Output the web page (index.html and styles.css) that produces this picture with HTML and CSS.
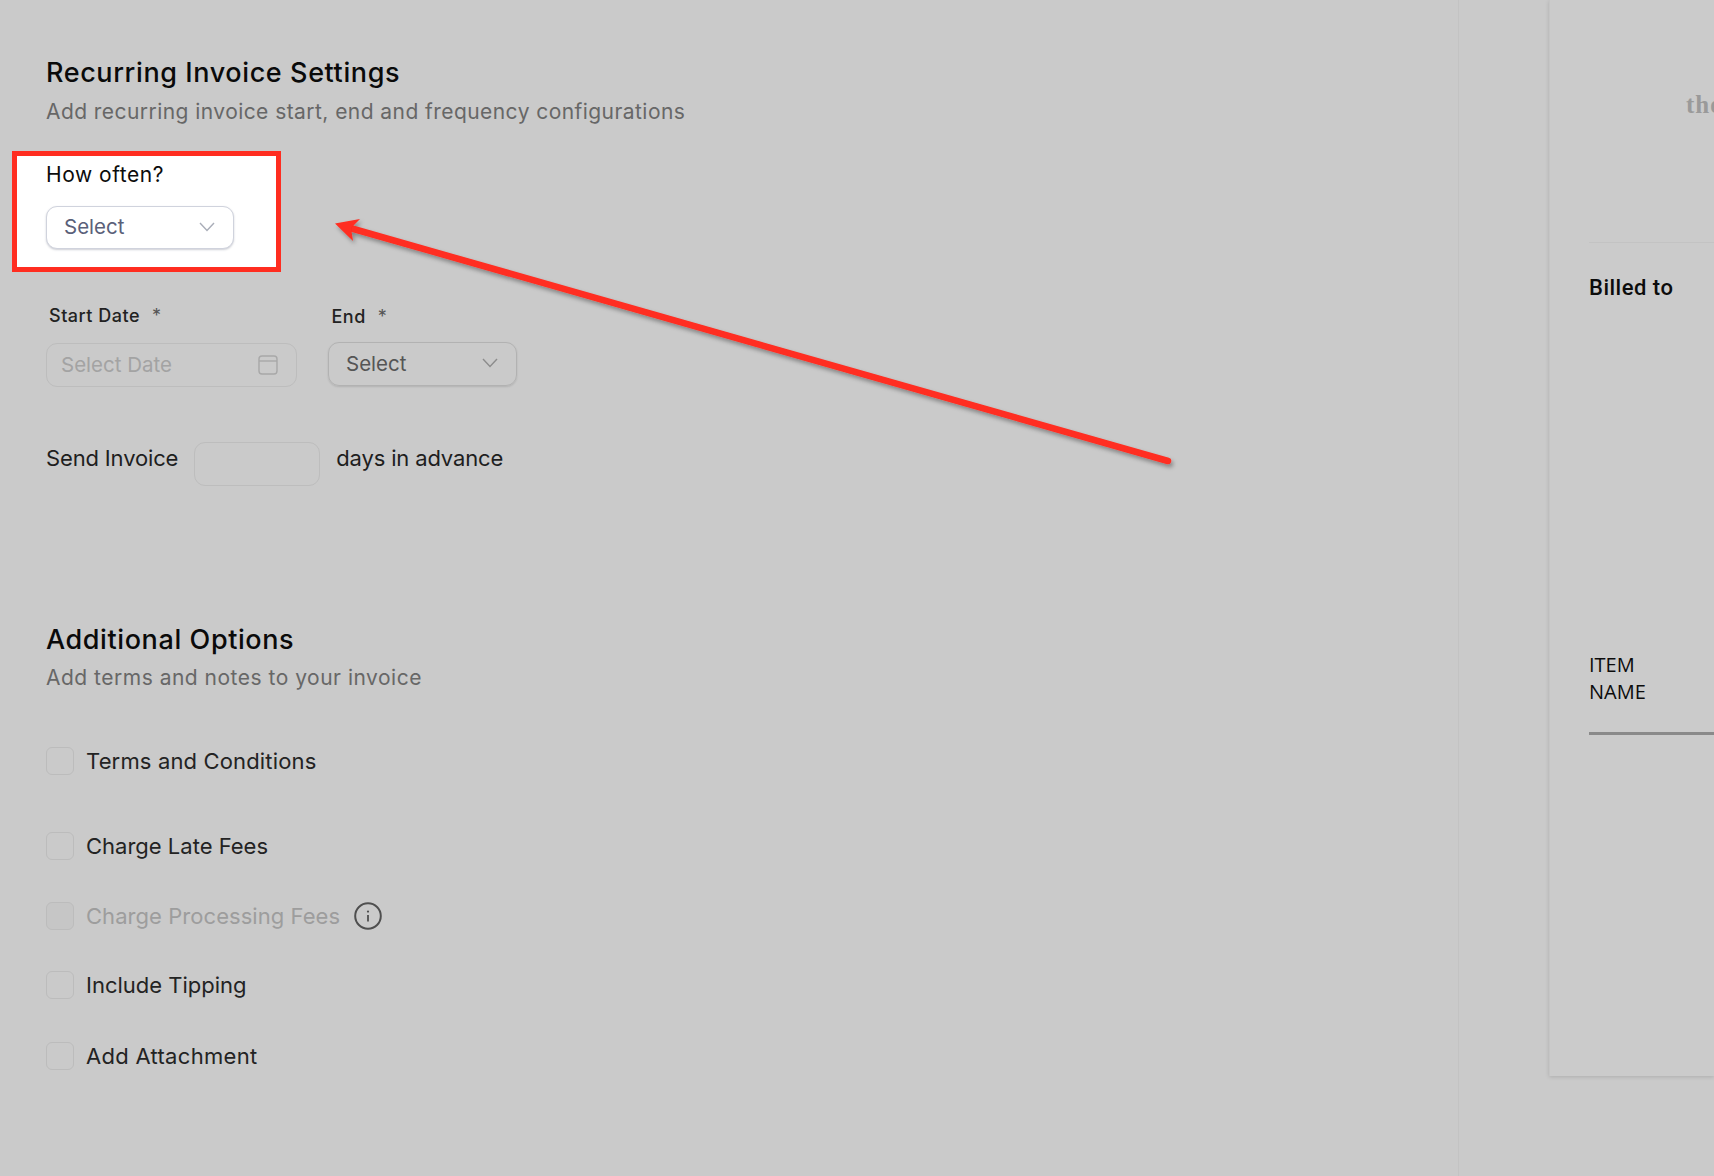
FILE: index.html
```html
<!DOCTYPE html>
<html lang="en">
<head>
<meta charset="utf-8">
<title>Recurring Invoice Settings</title>
<link rel="stylesheet" href="styles.css">
</head>
<body>
<div class="page">
  <main class="pane">
    <h2 class="title">Recurring Invoice Settings</h2>
    <p class="sub">Add recurring invoice start, end and frequency configurations</p>

    <section class="highlight">
      <div class="how">How often?</div>
      <div class="select select-lit">
        <span>Select</span>
        <svg class="chev" viewBox="0 0 16 10" width="16" height="10"><path d="M1 1l7 7.5L15 1" fill="none" stroke="#a9adb8" stroke-width="1.4"/></svg>
      </div>
    </section>

    <div class="dates">
      <div class="col-start">
        <div class="label">Start Date<span class="req">*</span></div>
        <div class="date">
          <span>Select Date</span>
          <svg class="cal" viewBox="0 0 20 20" width="20" height="20"><rect x="1" y="1" width="18" height="18" rx="3" fill="none" stroke="#a8a8a8" stroke-width="1.4"/><path d="M1 6h18" stroke="#a8a8a8" stroke-width="1.4"/></svg>
        </div>
      </div>
      <div class="col-end">
        <div class="label label-end">End<span class="req">*</span></div>
        <div class="select select-dim">
          <span>Select</span>
          <svg class="chev" viewBox="0 0 16 10" width="16" height="10"><path d="M1 1l7 7.5L15 1" fill="none" stroke="#8c8c8c" stroke-width="1.4"/></svg>
        </div>
      </div>
    </div>

    <div class="send">
      <span>Send Invoice</span>
      <div class="days"></div>
      <span>days in advance</span>
    </div>

    <h2 class="title title-options">Additional Options</h2>
    <p class="sub sub-options">Add terms and notes to your invoice</p>

    <div class="opt opt-terms"><span class="box"></span><span>Terms and Conditions</span></div>
    <div class="opt opt-late"><span class="box"></span><span>Charge Late Fees</span></div>
    <div class="opt opt-proc">
      <span class="box box-off"></span><span class="off">Charge Processing Fees</span>
      <svg class="info" viewBox="0 0 28 28" width="28" height="28"><circle cx="14" cy="14" r="12.8" fill="none" stroke="#4f4f4f" stroke-width="2"/><circle cx="14" cy="9.6" r="1.1" fill="#4f4f4f"/><path d="M14 13v6.5" stroke="#4f4f4f" stroke-width="1.8"/></svg>
    </div>
    <div class="opt opt-tip"><span class="box"></span><span>Include Tipping</span></div>
    <div class="opt opt-att"><span class="box"></span><span>Add Attachment</span></div>
  </main>

  <aside class="preview">
    <div class="preview-head"><span class="brand">the</span></div>
    <div class="billed">Billed to</div>
    <div class="items">ITEM<br>NAME</div>
  </aside>
</div>

<svg class="arrow" viewBox="0 0 1714 1176" width="1714" height="1176">
  <defs><filter id="sh" x="-5%" y="-20%" width="110%" height="140%"><feDropShadow dx="2" dy="3" stdDeviation="2" flood-color="#000" flood-opacity=".35"/></filter></defs>
  <g filter="url(#sh)">
    <path d="M1168 461L350 228" stroke="#ff2d20" stroke-width="6.5" stroke-linecap="round" fill="none"/>
    <path d="M335 223.5L360 219L351 228L353 241Z" fill="#ff2d20"/>
  </g>
</svg>
</body>
</html>
```

FILE: styles.css
```css
* { box-sizing: border-box; }
html, body { margin: 0; height: 100%; }
body {
  background: #cacaca;
  font-family: "Inter", "Liberation Sans", sans-serif;
  color: #1c1c1c;
  overflow: hidden;
  position: relative;
}
.page { display: flex; height: 1176px; width: 1714px; }

.pane {
  width: 1459px;
  flex: none;
  padding: 57px 0 0 46px;
  border-right: 1px solid #c3c3c3;
}
.title {
  margin: 0;
  font-size: 27px;
  line-height: 32px;
  font-weight: 450;
  letter-spacing: .6px;
  color: #0a0a0a;
}
.title-options { margin-top: 138px; }
.sub {
  margin: 9px 0 0;
  font-size: 21px;
  line-height: 28px;
  letter-spacing: .44px;
  color: #676767;
}
.sub-options { margin-top: 8px; letter-spacing: .5px; }

.highlight {
  width: 269px;
  height: 121px;
  margin: 25px 0 0 -34px;
  padding: 5px 0 0 29px;
  border: 5.5px solid #ff2d20;
  background: #fff;
}
.how { font-size: 21px; line-height: 28px; letter-spacing: .55px; color: #0c0c0c; }

.select {
  display: flex;
  align-items: center;
  justify-content: space-between;
  height: 43px;
  border-radius: 11px;
  padding: 0 18px 0 17px;
  font-size: 20.5px;
}
.select-lit {
  width: 188px;
  margin-top: 17px;
  padding-bottom: 2px;
  background: #fff;
  color: #5a6079;
  border: 1px solid #d0d3dd;
  box-shadow: 0 1px 2px rgba(60, 65, 90, .25);
}
.select-dim {
  width: 189px;
  height: 44px;
  padding-bottom: 2px;
  color: #555;
  border: 1px solid #b2b2b2;
  box-shadow: 0 1px 2px rgba(0, 0, 0, .12);
}

.dates { display: flex; gap: 31px; margin-top: 32px; }
.col-start { width: 251px; }
.col-end { width: 189px; padding-top: 1px; }
.label {
  height: 24px;
  padding-left: 3px;
  font-size: 18px;
  line-height: 24px;
  font-weight: 500;
  letter-spacing: .5px;
  color: #222;
  margin-bottom: 15px;
}
.label-end { padding-left: 3.5px; margin-bottom: 13px; }
.req { margin-left: 12px; font-weight: 400; color: #555; }
.date {
  display: flex;
  align-items: center;
  justify-content: space-between;
  height: 44px;
  padding: 0 18px 2px 14px;
  border: 1px solid #bdbdbd;
  border-radius: 11px;
  font-size: 20.5px;
  color: #a3a3a3;
}
.cal { margin-top: 2px; }

.send {
  display: flex;
  gap: 16px;
  margin-top: 55px;
  font-size: 22px;
  line-height: 32px;
  letter-spacing: -.15px;
  color: #1e1e1e;
}
.days {
  width: 126px;
  height: 44px;
  border: 1px solid #bdbdbd;
  border-radius: 11px;
}

.opt {
  display: flex;
  align-items: center;
  height: 28px;
  font-size: 22px;
  color: #232323;
}
.opt-terms { margin-top: 55px; letter-spacing: .15px; }
.opt-late { margin-top: 57px; }
.opt-proc { margin-top: 42px; letter-spacing: .05px; }
.opt-tip { margin-top: 41px; }
.opt-att { margin-top: 43px; letter-spacing: .3px; }
.box {
  width: 28px;
  height: 28px;
  margin-right: 12px;
  flex: none;
  border: 1px solid #bcbcbc;
  border-radius: 6px;
}
.box-off { background: #c6c6c6; }
.off { color: #9d9d9d; }
.info { margin-left: 14px; }

.preview {
  width: 165px;
  height: 1076px;
  margin-left: 90px;
  flex: none;
  overflow: hidden;
  background: #cbcbcb;
  box-shadow: 0 1px 4px rgba(0, 0, 0, .14);
  border-left: 1px solid #c5c5c5;
}
.preview-head {
  height: 243px;
  margin-left: 39px;
  padding: 88px 0 0 97px;
  border-bottom: 1px solid #c3c3c3;
  white-space: nowrap;
}
.brand {
  font-family: "Liberation Serif", serif;
  font-weight: 700;
  font-size: 25px;
  line-height: 34px;
  letter-spacing: 1px;
  color: #9a9a9a;
}
.billed {
  margin: 30px 0 0 39px;
  font-family: "Roboto", sans-serif;
  font-size: 22px;
  line-height: 30px;
  font-weight: 500;
  letter-spacing: .5px;
  color: #0c0c0c;
}
.items {
  margin: 348px 0 0 39px;
  padding-bottom: 27px;
  border-bottom: 3px solid #8a8a8a;
  font-family: "Open Sans", sans-serif;
  font-size: 20px;
  line-height: 27px;
  color: #0c0c0c;
}

.arrow { position: absolute; left: 0; top: 0; pointer-events: none; }
```
